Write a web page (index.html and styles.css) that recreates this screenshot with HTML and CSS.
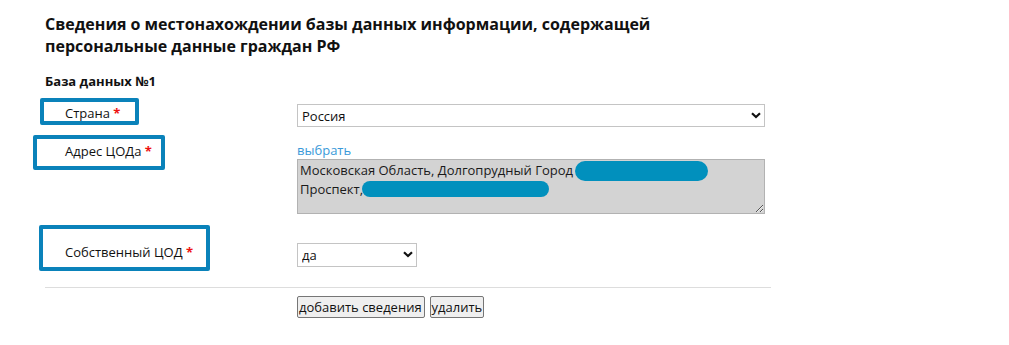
FILE: index.html
```html
<!DOCTYPE html>
<html lang="ru">
<head>
<meta charset="utf-8">
<title>Сведения о местонахождении базы данных</title>
<link rel="stylesheet" href="styles.css">
</head>
<body>
<div class="page">
  <h1 class="title">Сведения о местонахождении базы данных информации, содержащей<br>персональные данные граждан РФ</h1>
  <div class="subtitle">База данных №1</div>

  <div class="row row-country">
    <div class="label">
      <span class="mark mark-1"></span>
      Страна <span class="req">*</span>
    </div>
    <div class="control">
      <div class="select-wrap select-wide">
        <select class="select"><option>Россия</option></select>
        <svg class="chev" width="10" height="7" viewBox="0 0 10 7"><path d="M1 1.2 L5 5 L9 1.2" fill="none" stroke="#111" stroke-width="2.2"/></svg>
      </div>
    </div>
  </div>

  <div class="row row-address">
    <div class="label">
      <span class="mark mark-2"></span>
      Адрес ЦОДа <span class="req">*</span>
    </div>
    <div class="control">
      <a class="link" href="#">выбрать</a>
      <div class="area-wrap">
        <textarea class="area" readonly>Московская Область, Долгопрудный Город
Проспект,</textarea>
        <span class="blob blob-1"></span>
        <span class="blob blob-2"></span>
      </div>
    </div>
  </div>

  <div class="row row-own">
    <div class="label">
      <span class="mark mark-3"></span>
      Собственный ЦОД <span class="req">*</span>
    </div>
    <div class="control">
      <div class="select-wrap select-small">
        <select class="select"><option>да</option></select>
        <svg class="chev" width="10" height="7" viewBox="0 0 10 7"><path d="M1 1.2 L5 5 L9 1.2" fill="none" stroke="#111" stroke-width="2.2"/></svg>
      </div>
    </div>
  </div>

  <div class="divider"></div>

  <div class="row row-buttons">
    <div class="label"></div>
    <div class="control buttons">
      <button class="btn btn-add" type="button">добавить сведения</button>
      <button class="btn" type="button">удалить</button>
    </div>
  </div>
</div>
</body>
</html>
```

FILE: styles.css
```css
html, body {
  margin: 0;
  padding: 0;
  background: #ffffff;
}

body {
  font-family: "Open Sans", "DejaVu Sans", sans-serif;
  font-size: 13px;
  color: #111;
}

.page {
  padding-left: 45px;
  padding-top: 13px;
  width: 726px;
}

.title {
  margin: 0;
  font-size: 16px;
  line-height: 22px;
  font-weight: 700;
  color: #111;
}

.subtitle {
  margin-top: 16px;
  font-size: 13px;
  line-height: 16px;
  font-weight: 700;
}

.row {
  display: flex;
  align-items: flex-start;
}

.label {
  position: relative;
  width: 252px;
  flex: none;
  box-sizing: border-box;
  padding-left: 20px;
  line-height: 18px;
  color: #111;
}

.req {
  color: #ee1111;
  font-weight: 700;
}

.mark {
  position: absolute;
  box-sizing: border-box;
  border: 4px solid #0a82ba;
  border-radius: 2px;
}

.mark-1 { left: -5px; top: -6px; width: 99px; height: 27px; }
.mark-2 { left: -12px; top: -7px; width: 132px; height: 35px; }
.mark-3 { left: -6px; top: -18px; width: 171px; height: 46px; }

.control {
  width: 468px;
  flex: none;
}

.row-country { margin-top: 15px; }
.row-address { margin-top: 15px; }
.row-own { margin-top: 29px; }

.select-wrap {
  position: relative;
}

.select-wide { width: 468px; }
.select-small { width: 120px; }

.select {
  appearance: none;
  -webkit-appearance: none;
  display: block;
  width: 100%;
  height: 23px;
  box-sizing: border-box;
  margin: 0;
  padding: 0 20px 0 4px;
  border: 1px solid #c4c4c4;
  border-radius: 0;
  background: #fff;
  font-family: "Open Sans", sans-serif;
  font-size: 13px;
  color: #111;
}

.select-small .select { height: 24px; }

.chev {
  position: absolute;
  right: 4px;
  top: 8px;
  pointer-events: none;
}

.link {
  display: block;
  line-height: 17px;
  color: #3a9ad9;
  text-decoration: none;
}

.area-wrap {
  position: relative;
  width: 468px;
  height: 55px;
}

.area {
  display: block;
  width: 468px;
  height: 55px;
  box-sizing: border-box;
  margin: 0;
  padding: 1px 2px;
  border: 1px solid #b2b2b2;
  background: #d3d3d3;
  font-family: "Open Sans", sans-serif;
  font-size: 13px;
  line-height: 19px;
  color: #1a1a1a;
  resize: both;
  overflow: hidden;
}

.blob {
  position: absolute;
  background: #0190bd;
}

.blob-1 { left: 278px; top: 2px; width: 133px; height: 20px; border-radius: 10px; }
.blob-2 { left: 65px; top: 22px; width: 187px; height: 16px; border-radius: 8px; }

.divider {
  margin-top: 20px;
  height: 1px;
  background: #dddddd;
  width: 726px;
}

.row-buttons { margin-top: 8px; }

.buttons {
  display: flex;
  gap: 5px;
}

.btn {
  height: 22px;
  margin: 0;
  padding: 0 1px;
  box-sizing: border-box;
  border: 1px solid #767676;
  border-radius: 2px;
  background: #efefef;
  font-family: "Open Sans", sans-serif;
  font-size: 13px;
  color: #111;
  line-height: 18px;
}

.btn-add {
  padding-right: 2px;
}
```
